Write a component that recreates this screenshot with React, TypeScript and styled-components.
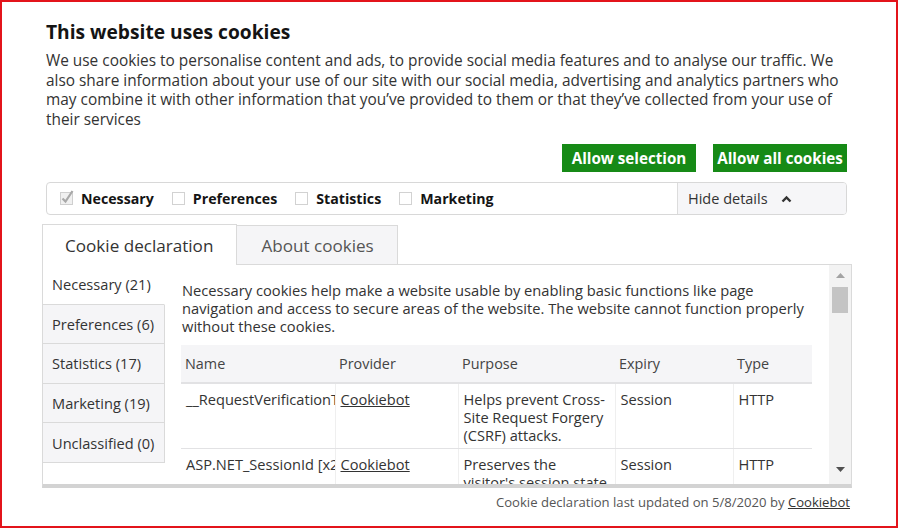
import React from "react";
import styled, { createGlobalStyle } from "styled-components";

const Global = createGlobalStyle`
  html, body { margin: 0; padding: 0; background: #fff; }
  body { font-family: "Open Sans", "Noto Sans", sans-serif; color: #333; }
  * { box-sizing: border-box; }
`;

const Frame = styled.div`
  width: 898px;
  height: 528px;
  border: 2px solid #e3141b;
  background: #fff;
  overflow: hidden;
`;

const Dialog = styled.div`
  margin-left: 40px;
  width: 810px;
  padding-top: 18px;
  display: flex;
  flex-direction: column;
`;

const Header = styled.div`
  padding: 0 5px 0 4px;
  display: flex;
  flex-direction: column;
`;

const Title = styled.h2`
  margin: 0;
  font-size: 19.2px;
  line-height: 24px;
  font-weight: 700;
  color: #141414;
`;

const Intro = styled.p`
  margin: 7px 0 0;
  font-size: 15.4px;
  line-height: 19.5px;
  color: #333;
`;

const ButtonRow = styled.div`
  display: flex;
  justify-content: flex-end;
  gap: 17px;
  margin-top: 15px;
`;

const GreenButton = styled.button`
  width: 134px;
  height: 28px;
  border: none;
  background: #168a16;
  color: #fff;
  font-family: inherit;
  font-weight: 700;
  font-size: 15.2px;
  padding: 0 2px;
  cursor: pointer;
  white-space: nowrap;
`;

const CheckBar = styled.div`
  margin-top: 10px;
  height: 33px;
  border: 1px solid #d8d8d8;
  border-radius: 4px;
  display: flex;
  overflow: hidden;
`;

const CheckList = styled.div`
  flex: 1;
  display: flex;
  align-items: center;
  padding-left: 13px;
`;

const CheckItem = styled.label`
  display: flex;
  align-items: center;
  margin-right: 18px;
  font-size: 14.2px;
  font-weight: 700;
  color: #141414;
`;

const Box = styled.span`
  width: 13px;
  height: 13px;
  border: 1px solid #d2d2d2;
  background: #fff;
  margin-right: 8px;
  display: inline-block;
`;

const CheckedIcon = styled.svg`
  margin-right: 6px;
  margin-top: -3px;
`;

const HideDetails = styled.div`
  width: 169px;
  background: #f6f6f8;
  border-left: 1px solid #dcdcdc;
  display: flex;
  align-items: center;
  padding-left: 10px;
  font-size: 14.5px;
  color: #333;
  gap: 13px;
`;

const TabRow = styled.div`
  margin-top: 9px;
  display: flex;
  align-items: flex-end;
`;

const Tab = styled.div<{ $active?: boolean }>`
  height: ${(p) => (p.$active ? "41px" : "40px")};
  padding: 0 23px 0 ${(p) => (p.$active ? "22px" : "24px")};
  display: flex;
  align-items: center;
  font-size: 17.1px;
  color: ${(p) => (p.$active ? "#333" : "#555")};
  background: ${(p) => (p.$active ? "#fff" : "#f5f5f7")};
  border: 1px solid #dadada;
  border-bottom: ${(p) => (p.$active ? "none" : "1px solid #dadada")};
  border-left: ${(p) => (p.$active ? "1px solid #dadada" : "none")};
`;

const TabFiller = styled.div`
  flex: 1;
  border-bottom: 1px solid #dadada;
`;

const Panel = styled.div`
  height: 223px;
  display: flex;
  border-left: 1px solid #dadada;
  border-right: 1px solid #dadada;
  border-bottom: 4px solid #d3d3d3;
  overflow: hidden;
`;

const Sidebar = styled.div`
  width: 122px;
  display: flex;
  flex-direction: column;
  flex-shrink: 0;
`;

const SideItem = styled.div<{ $active?: boolean }>`
  height: 39.6px;
  display: flex;
  align-items: center;
  padding-left: 9px;
  font-size: 14.6px;
  color: #333;
  background: ${(p) => (p.$active ? "#fff" : "#f5f5f7")};
  border-bottom: 1px solid #dadada;
  border-right: ${(p) => (p.$active ? "1px solid transparent" : "1px solid #dadada")};
`;

const Main = styled.div`
  flex: 1;
  padding: 16px 18px 0 16px;
  overflow: hidden;
`;

const Desc = styled.p`
  margin: 0;
  font-size: 14.7px;
  line-height: 18px;
  color: #333;
  padding-left: 1px;
`;

const Table = styled.table`
  margin-top: 10px;
  width: 631px;
  border-collapse: collapse;
  table-layout: fixed;
  font-size: 14.6px;
  color: #333;
`;

const Th = styled.th<{ $w: number }>`
  width: ${(p) => p.$w}px;
  height: 38px;
  background: #f5f5f7;
  font-weight: 400;
  font-size: 14.4px;
  text-align: left;
  padding: 0 4px;
  border-bottom: 2px solid #e2e2e4;
  color: #444;
`;

const Td = styled.td`
  vertical-align: top;
  padding: 6px 5px 4px;
  line-height: 18px;
  border-bottom: 1px solid #e2e2e4;
  border-right: 1px solid #efefef;
  overflow: hidden;
  &:last-child { border-right: none; }
`;

const NameCell = styled(Td)`
  white-space: nowrap;
  padding-right: 1px;
`;

const TdRow = styled.tr`
  height: 65px;
`;

const Link = styled.a`
  color: #333;
  text-decoration: underline;
`;

const ScrollTrack = styled.div`
  width: 22px;
  flex-shrink: 0;
  background: #f3f3f3;
  display: flex;
  flex-direction: column;
  align-items: center;
  padding-top: 8px;
`;

const Thumb = styled.div`
  width: 16px;
  height: 26px;
  background: #c4c4c4;
  margin-top: 9px;
`;

const ScrollSpacer = styled.div`
  flex: 1;
`;

const ArrowDown = styled.div`
  margin-bottom: 7px;
`;

const Footer = styled.div`
  text-align: right;
  font-size: 13.1px;
  line-height: 18px;
  color: #555;
  padding: 5px 2px 0 0;
`;

const Checked = () => (
  <CheckedIcon width="15" height="16" viewBox="0 0 15 16">
    <rect x="0.5" y="3.5" width="12" height="12" fill="#f0f0f0" stroke="#cfcfcf" />
    <path d="M2.5 9.5 L5.5 12.5 L12.5 2" fill="none" stroke="#a9a9a9" strokeWidth="2.2" />
  </CheckedIcon>
);

const Chevron = () => (
  <svg width="11" height="8" viewBox="0 0 11 8">
    <path d="M1.5 6.5 L5.5 2.5 L9.5 6.5" fill="none" stroke="#333" strokeWidth="2.4" />
  </svg>
);

const Tri = ({ up }: { up?: boolean }) => (
  <svg width="9" height="5" viewBox="0 0 9 5">
    <path d={up ? "M0 5 L4.5 0 L9 5 Z" : "M0 0 L4.5 5 L9 0 Z"} fill={up ? "#a3a3a3" : "#505050"} />
  </svg>
);

export default function App() {
  return (
    <>
      <Global />
      <Frame>
        <Dialog>
          <Header>
            <Title>This website uses cookies</Title>
            <Intro>
              We use cookies to personalise content and ads, to provide social media features and to analyse our traffic. We
              also share information about your use of our site with our social media, advertising and analytics partners who
              may combine it with other information that you’ve provided to them or that they’ve collected from your use of
              their services
            </Intro>
            <ButtonRow>
              <GreenButton>Allow selection</GreenButton>
              <GreenButton>Allow all cookies</GreenButton>
            </ButtonRow>
            <CheckBar>
              <CheckList>
                <CheckItem>
                  <Checked />
                  Necessary
                </CheckItem>
                <CheckItem>
                  <Box />
                  Preferences
                </CheckItem>
                <CheckItem>
                  <Box />
                  Statistics
                </CheckItem>
                <CheckItem>
                  <Box />
                  Marketing
                </CheckItem>
              </CheckList>
              <HideDetails>
                Hide details
                <Chevron />
              </HideDetails>
            </CheckBar>
          </Header>
          <TabRow>
            <Tab $active>Cookie declaration</Tab>
            <Tab>About cookies</Tab>
            <TabFiller />
          </TabRow>
          <Panel>
            <Sidebar>
              <SideItem $active>Necessary (21)</SideItem>
              <SideItem>Preferences (6)</SideItem>
              <SideItem>Statistics (17)</SideItem>
              <SideItem>Marketing (19)</SideItem>
              <SideItem>Unclassified (0)</SideItem>
            </Sidebar>
            <Main>
              <Desc>
                Necessary cookies help make a website usable by enabling basic functions like page navigation and access to
                secure areas of the website. The website cannot function properly without these cookies.
              </Desc>
              <Table>
                <thead>
                  <tr>
                    <Th $w={154}>Name</Th>
                    <Th $w={123}>Provider</Th>
                    <Th $w={157}>Purpose</Th>
                    <Th $w={118}>Expiry</Th>
                    <Th $w={79}>Type</Th>
                  </tr>
                </thead>
                <tbody>
                  <TdRow>
                    <NameCell>__RequestVerificationToken</NameCell>
                    <Td>
                      <Link>Cookiebot</Link>
                    </Td>
                    <Td>Helps prevent Cross-Site Request Forgery (CSRF) attacks.</Td>
                    <Td>Session</Td>
                    <Td>HTTP</Td>
                  </TdRow>
                  <TdRow>
                    <NameCell>ASP.NET_SessionId [x2]</NameCell>
                    <Td>
                      <Link>Cookiebot</Link>
                    </Td>
                    <Td>Preserves the visitor's session state across page requests.</Td>
                    <Td>Session</Td>
                    <Td>HTTP</Td>
                  </TdRow>
                </tbody>
              </Table>
            </Main>
            <ScrollTrack>
              <Tri up />
              <Thumb />
              <ScrollSpacer />
              <ArrowDown>
                <Tri />
              </ArrowDown>
            </ScrollTrack>
          </Panel>
          <Footer>
            Cookie declaration last updated on 5/8/2020 by <Link>Cookiebot</Link>
          </Footer>
        </Dialog>
      </Frame>
    </>
  );
}
